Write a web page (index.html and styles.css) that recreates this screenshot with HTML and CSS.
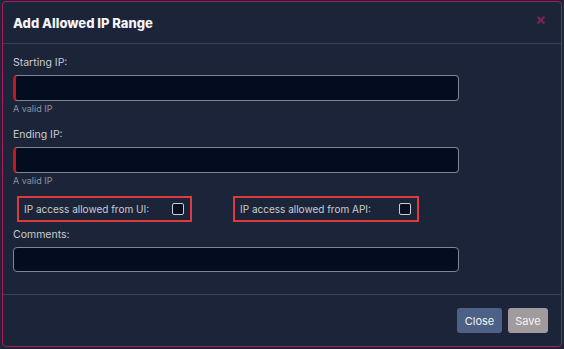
FILE: index.html
```html
<!DOCTYPE html>
<html lang="en">
<head>
    <meta charset="UTF-8">
    <meta name="viewport" content="width=device-width, initial-scale=1.0">
    <title>Add Allowed IP Range</title>
    <link rel="stylesheet" href="styles.css">
</head>
<body>
    <div class="modal">
        <!-- Header -->
        <div class="modal-header">
            <h1 class="modal-title">Add Allowed IP Range</h1>
            <span class="modal-close">&times;</span>
        </div>

        <!-- Body -->
        <div class="modal-body">
            <div class="field">
                <label class="field-label">Starting IP:</label>
                <input class="field-input invalid" type="text">
                <small class="field-hint">A valid IP</small>
            </div>

            <div class="field">
                <label class="field-label">Ending IP:</label>
                <input class="field-input invalid" type="text">
                <small class="field-hint">A valid IP</small>
            </div>

            <div class="checks">
                <label class="check-box check-ui">
                    <span>IP access allowed from UI:</span>
                    <input type="checkbox">
                </label>
                <label class="check-box check-api">
                    <span>IP access allowed from API:</span>
                    <input type="checkbox">
                </label>
            </div>

            <div class="field">
                <label class="field-label">Comments:</label>
                <input class="field-input comments" type="text">
            </div>
        </div>

        <!-- Footer -->
        <div class="modal-footer">
            <button class="btn btn-close">Close</button>
            <button class="btn btn-save">Save</button>
        </div>
    </div>
</body>
</html>
```

FILE: styles.css
```css
body {
    font-family: Inter, "Liberation Sans", sans-serif;
    background: #1c2636;
    margin: 0;
    padding: 1px 2px;
    height: 100vh;
    box-sizing: border-box;
}
.modal {
    display: flex;
    flex-direction: column;
    width: 560px;
    height: 346px;
    box-sizing: border-box;
    background: #1b2438;
    border: 1px solid #b01a5c;
    border-radius: 4px;
}
.modal-header {
    display: flex;
    align-items: center;
    justify-content: space-between;
    height: 41px;
    padding: 0 10px;
    border-bottom: 1px solid #3a4354;
}
.modal-title {
    margin: 0;
    color: #f4f5f7;
    font-size: 13px;
    font-weight: 800;
}
.modal-close {
    color: #7c2454;
    font-size: 16px;
    font-weight: 700;
    line-height: 1;
    margin-right: 5px;
    margin-top: -8px;
}
.modal-body {
    flex: 1;
    padding: 12px 10px 0;
}
.field {
    display: flex;
    flex-direction: column;
    width: 446px;
}
.field + .field {
    margin-top: 13px;
}
.field-label {
    color: #c9cdd4;
    font-size: 10.5px;
    line-height: 14px;
    margin-bottom: 5px;
}
.field-input {
    height: 26px;
    box-sizing: border-box;
    background: #040d1f;
    border: 1px solid #7f8593;
    border-radius: 4px;
    color: #fff;
    padding: 0 6px;
}
.field-input.invalid {
    border-left: 3px solid #c4161c;
}
.field-input.comments {
    height: 25px;
}
.field-hint {
    color: #8d94a0;
    font-size: 9px;
    line-height: 12px;
    margin-top: 2px;
}
.checks {
    display: flex;
    gap: 41px;
    margin: 9px 0 0 4px;
}
.check-box {
    display: flex;
    align-items: center;
    justify-content: space-between;
    height: 26px;
    box-sizing: border-box;
    border: 2px solid #e03a3c;
    padding: 0 6px 0 5px;
    color: #c9cdd4;
    font-size: 10px;
}
.check-ui {
    width: 175px;
}
.check-api {
    width: 186px;
}
.check-box input {
    appearance: none;
    width: 12px;
    height: 12px;
    margin: 0;
    background: #0a1020;
    border: 1.5px solid #c9cdd4;
    border-radius: 2px;
    box-sizing: border-box;
}
.checks + .field {
    margin-top: 6px;
}
.modal-footer {
    display: flex;
    justify-content: flex-end;
    align-items: center;
    gap: 6px;
    height: 52px;
    padding: 0 13px;
    border-top: 1px solid #3a4354;
    box-sizing: border-box;
}
.btn {
    height: 25px;
    border: none;
    border-radius: 3px;
    color: #f4f5f7;
    font-family: inherit;
    font-size: 11px;
    padding: 0;
}
.btn-close {
    background: #4c6185;
    width: 45px;
}
.btn-save {
    background: #a19b9d;
    width: 40px;
}
```
